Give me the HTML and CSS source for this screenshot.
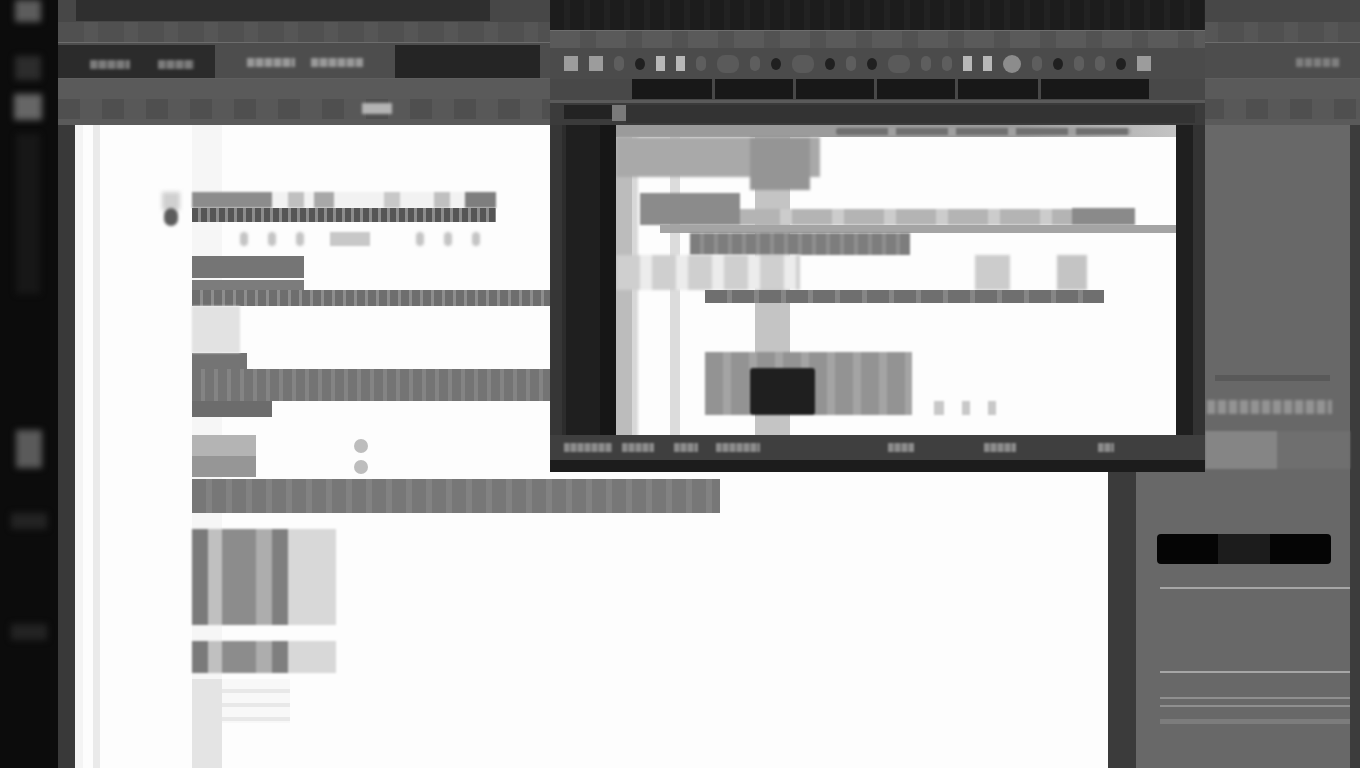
FILE: index.html
```html
<!DOCTYPE html>
<html lang="en">
<head>
  <meta charset="UTF-8">
  <meta name="viewport" content="width=device-width, initial-scale=1.0">
  <title>Desktop</title>
  <link rel="stylesheet" href="styles.css">
</head>
<body>
  <div class="desktop">
    <!-- far left dock -->
    <div class="dock">
      <div class="dock-icon dock-a"></div>
      <div class="dock-icon dock-b"></div>
      <div class="dock-icon dock-c"></div>
      <div class="dock-icon dock-d"></div>
      <div class="dock-icon dock-e"></div>
      <div class="dock-icon dock-f"></div>
      <div class="dock-icon dock-f"></div>
    </div>

    <!-- big window behind -->
    <div class="app">
      <div class="app-title">
        <div class="app-title-bar"></div>
      </div>
      <div class="app-menu"></div>
      <div class="app-tools">
        <div class="tool-dark tool-left"><span class="blobs blob-a"></span><span class="blobs blob-b"></span></div>
        <div class="tool-mid"><span class="blobs blob-c"></span><span class="blobs blob-d"></span></div>
        <div class="tool-dark tool-right"></div>
        <div class="tool-far"><span class="blobs blob-e"></span></div>
      </div>
      <div class="app-ribbon">
        <div class="ribbon-chip"></div>
      </div>

      <div class="app-body">
        <div class="side-rail"></div>
        <div class="page">
          <div class="row-head">
            <div class="head-marker"></div>
            <div class="head-marker-dark"></div>
            <div class="head-bar">
              <div class="head-tabs">
                <span class="tab tab-1"></span><span class="tab tab-2"></span><span class="tab tab-3"></span>
                <span class="tab tab-4"></span><span class="tab tab-5"></span><span class="tab tab-6"></span>
              </div>
              <div class="head-text"></div>
            </div>
          </div>
          <div class="row-chips">
            <span class="dot"></span><span class="dot"></span><span class="dot"></span><span class="chip"></span>
            <span class="dot dot-far"></span><span class="dot"></span><span class="dot"></span>
          </div>
          <div class="bar bar-title"></div>
          <div class="bar-wrap">
            <div class="bar bar-title-2"></div>
            <div class="bar bar-long-text"></div>
          </div>
          <div class="stub"></div>
          <div class="bar bar-label"></div>
          <div class="bar bar-wide"></div>
          <div class="bar bar-foot"></div>
          <div class="pair">
            <div class="pair-row"><span class="pair-cell"></span><span class="pair-dot"></span></div>
            <div class="pair-row"><span class="pair-cell pair-cell-dark"></span><span class="pair-dot"></span></div>
          </div>
          <div class="bar bar-span"></div>
          <div class="table-block table-tall">
            <span class="cell c-dark"></span><span class="cell c-light"></span><span class="cell c-mid"></span><span class="cell c-soft"></span><span class="cell c-dark-narrow"></span><span class="cell c-pale"></span>
          </div>
          <div class="table-block table-short">
            <span class="cell c-dark"></span><span class="cell c-light"></span><span class="cell c-mid"></span><span class="cell c-soft"></span><span class="cell c-dark-narrow"></span><span class="cell c-pale"></span>
          </div>
          <div class="fade-lines"></div>
        </div>
        <div class="gutter"></div>
        <div class="panel">
          <div class="panel-body">
            <div class="panel-line-dark"></div>
            <div class="panel-blobs"></div>
            <div class="panel-light"></div>
            <div class="panel-pill"></div>
            <div class="panel-rule panel-rule-1"></div>
            <div class="panel-rule panel-rule-2"></div>
            <div class="panel-rule panel-rule-3"></div>
            <div class="panel-rule panel-rule-4"></div>
            <div class="panel-rule panel-rule-5"></div>
          </div>
          <div class="panel-edge"></div>
        </div>
      </div>
    </div>

    <!-- floating window -->
    <div class="float">
      <div class="float-top"></div>
      <div class="float-menu"></div>
      <div class="float-tools">
        <span class="ico ico-sq"></span><span class="ico ico-sq"></span><span class="ico ico-dim"></span><span class="ico ico-dark"></span>
        <span class="ico ico-light"></span><span class="ico ico-light"></span><span class="ico ico-dim"></span><span class="ico ico-wide"></span>
        <span class="ico ico-dim"></span><span class="ico ico-dark"></span><span class="ico ico-wide"></span><span class="ico ico-dark"></span>
        <span class="ico ico-dim"></span><span class="ico ico-dark"></span><span class="ico ico-wide"></span><span class="ico ico-dim"></span>
        <span class="ico ico-dim"></span><span class="ico ico-light"></span><span class="ico ico-light"></span><span class="ico ico-round"></span>
        <span class="ico ico-dim"></span><span class="ico ico-dark"></span><span class="ico ico-dim"></span><span class="ico ico-dim"></span>
        <span class="ico ico-dark"></span><span class="ico ico-sq"></span>
      </div>
      <div class="float-fields">
        <span class="field field-1"></span><span class="field field-2"></span><span class="field field-3"></span>
        <span class="field field-4"></span><span class="field field-5"></span><span class="field field-6"></span>
      </div>
      <div class="float-tabs">
        <span class="tab-dark"></span><span class="tab-light"></span><span class="tab-fill"></span>
      </div>
      <div class="float-body">
        <div class="rail-outer"></div>
        <div class="rail-inner"></div>
        <div class="fpage">
          <div class="fpage-top"><span class="pills"></span></div>
          <div class="fblock-top"><span class="fblock-col"></span></div>
          <div class="fhead">
            <span class="fhead-left"></span>
            <span class="fhead-text"></span>
            <span class="fhead-chip"></span>
          </div>
          <div class="fband"></div>
          <div class="fsub"></div>
          <div class="fcols"><span class="fcol-a"></span><span class="fcol-b"></span><span class="fcol-c"></span></div>
          <div class="fline"></div>
          <div class="fgap"></div>
          <div class="fimage-row">
            <div class="fimage"><span class="fimage-dark"></span></div>
            <span class="fmini fmini-a"></span><span class="fmini fmini-b"></span><span class="fmini fmini-b"></span>
          </div>
        </div>
        <div class="rail-right"></div>
        <div class="rail-edge"></div>
      </div>
      <div class="float-status">
        <span class="sblob s1"></span><span class="sblob s2"></span><span class="sblob s3"></span><span class="sblob s4"></span>
        <span class="sblob s5"></span><span class="sblob s6"></span><span class="sblob s7"></span>
      </div>
      <div class="float-foot"></div>
    </div>
  </div>
</body>
</html>
```

FILE: styles.css
```css
html, body {
  margin: 0;
  padding: 0;
  background: #0c0c0c;
}

.desktop {
  position: relative;
  display: flex;
  width: 1360px;
  height: 768px;
  overflow: hidden;
}

/* dock */
.dock {
  width: 58px;
  flex: none;
  background: #0c0c0c;
  display: flex;
  flex-direction: column;
  align-items: center;
  position: relative;
}

.dock-icon {
  filter: blur(3px);
  flex: none;
}

.dock-a { width: 26px; height: 22px; background: #5c5c5c; margin: 0 0 34px -2px; }
.dock-b { width: 26px; height: 24px; background: #2c2c2c; margin: 0 0 14px -2px; }
.dock-c { width: 28px; height: 26px; background: #666; margin: 0 0 14px -2px; }
.dock-d { width: 24px; height: 160px; background: #171717; margin: 0 0 136px -2px; }
.dock-e { width: 26px; height: 38px; background: #5a5a5a; margin: 0 0 45px 0; }
.dock-f { width: 36px; height: 16px; background: #232323; margin: 0 0 95px 0; }

/* big window */
.app {
  flex: 1;
  display: flex;
  flex-direction: column;
  min-width: 0;
}

.app-title {
  height: 22px;
  background: #474747;
  padding-left: 18px;
}

.app-title-bar {
  width: 414px;
  height: 21px;
  background: #2f2f2f;
}

.app-menu {
  height: 20px;
  background: repeating-linear-gradient(90deg, #505050 0 26px, #565656 26px 40px);
  border-bottom: 1px solid #6d6d6d;
}

.app-tools {
  height: 35px;
  display: flex;
  background: #4d4d4d;
}

.tool-dark {
  background: #2b2b2b;
  height: 33px;
  margin-top: 2px;
}

.tool-left {
  width: 157px;
  position: relative;
}

.tool-right {
  width: 145px;
  background: #252525;
}

.tool-mid {
  width: 180px;
  position: relative;
}

.tool-far {
  flex: 1;
  position: relative;
}

.blobs {
  position: absolute;
  top: 15px;
  height: 9px;
  filter: blur(1.5px);
  background: repeating-linear-gradient(90deg, #9a9a9a 0 7px, #6a6a6a 7px 9px);
}

.blob-a { left: 32px; width: 40px; background: repeating-linear-gradient(90deg, #7c7c7c 0 7px, #555 7px 9px); }
.blob-b { left: 100px; width: 36px; background: repeating-linear-gradient(90deg, #7c7c7c 0 7px, #555 7px 9px); }
.blob-c { left: 32px; width: 48px; }
.blob-d { left: 96px; width: 52px; }
.blob-e { right: 20px; width: 44px; background: repeating-linear-gradient(90deg, #808080 0 7px, #555 7px 9px); }

.app-ribbon {
  height: 47px;
  background:
    repeating-linear-gradient(90deg, #4f4f4f 0 22px, #585858 22px 44px) 0 20px / 100% 20px no-repeat,
    #5a5a5a;
  border-top: 1px solid #5f5f5f;
  box-sizing: border-box;
  padding: 24px 0 0 304px;
}

.ribbon-chip {
  width: 30px;
  height: 11px;
  background: #b4b4b4;
  filter: blur(1.5px);
}

.app-body {
  flex: 1;
  display: flex;
  min-height: 0;
}

.side-rail {
  width: 17px;
  flex: none;
  background: #393939;
}

/* document page */
.page {
  width: 1033px;
  flex: none;
  background:
    linear-gradient(90deg, #f4f4f4 0 8px, transparent 8px 18px, #eaeaea 18px 25px, transparent 25px),
    linear-gradient(90deg, transparent 117px, #f6f6f6 117px 147px, transparent 147px);
  background-color: #fdfdfd;
  padding: 67px 0 0 117px;
  box-sizing: border-box;
  position: relative;
}

.row-head {
  position: relative;
}

.head-marker {
  position: absolute;
  left: -30px;
  top: 0;
  width: 18px;
  height: 18px;
  background: #d0d0d0;
  filter: blur(2px);
}

.head-marker-dark {
  position: absolute;
  left: -28px;
  top: 16px;
  width: 14px;
  height: 18px;
  background: #5c5c5c;
  border-radius: 7px;
  filter: blur(1.5px);
}

.head-bar {
  width: 304px;
}

.head-tabs {
  height: 16px;
  display: flex;
  background: #f2f2f2;
  filter: blur(1px);
}

.tab {
  display: block;
  height: 16px;
  background: #aaa;
}

.tab-1 { width: 80px; background: #8c8c8c; }
.tab-2 { width: 16px; margin-left: 16px; background: #c0c0c0; }
.tab-3 { width: 20px; margin-left: 10px; background: #a8a8a8; }
.tab-4 { width: 16px; margin-left: 50px; background: #c8c8c8; }
.tab-5 { width: 16px; margin-left: 34px; background: #c0c0c0; }
.tab-6 { width: 31px; margin-left: 15px; background: #7e7e7e; }

.head-text {
  height: 14px;
  background: repeating-linear-gradient(90deg, #555 0 6px, #8c8c8c 6px 9px);
  filter: blur(.5px);
}

.row-chips {
  height: 34px;
  display: flex;
  align-items: center;
  padding-left: 48px;
  gap: 20px;
}

.dot {
  width: 8px;
  height: 14px;
  border-radius: 4px;
  background: #c4c4c4;
  filter: blur(1.5px);
}

.dot-far {
  margin-left: 26px;
}

.chip {
  width: 40px;
  height: 14px;
  background: #c8c8c8;
  margin-left: 6px;
  filter: blur(1px);
}

.bar {
  background: #777;
}

.bar-title {
  width: 112px;
  height: 22px;
  background: #757575;
  margin-top: 0;
  filter: blur(.5px);
}

.bar-wrap {
  position: relative;
  height: 26px;
  margin-top: 2px;
}

.bar-title-2 {
  width: 112px;
  height: 26px;
  background: #7c7c7c;
}

.bar-long-text {
  position: absolute;
  left: 0;
  top: 10px;
  width: 358px;
  height: 16px;
  background: repeating-linear-gradient(90deg, #6e6e6e 0 8px, #8e8e8e 8px 11px);
  filter: blur(.5px);
}

.stub {
  width: 48px;
  height: 47px;
  background: #e2e2e2;
  filter: blur(1px);
}

.bar-label {
  width: 55px;
  height: 16px;
  background: #747474;
}

.bar-wide {
  width: 358px;
  height: 32px;
  background: repeating-linear-gradient(90deg, #747474 0 9px, #848484 9px 13px);
  filter: blur(.5px);
}

.bar-foot {
  width: 80px;
  height: 16px;
  background: #6c6c6c;
}

.pair {
  margin-top: 18px;
}

.pair-row {
  display: flex;
  align-items: center;
  height: 21px;
}

.pair-cell {
  display: block;
  width: 64px;
  height: 21px;
  background: #b4b4b4;
}

.pair-cell-dark {
  background: #969696;
}

.pair-dot {
  width: 14px;
  height: 14px;
  border-radius: 50%;
  background: #bdbdbd;
  margin-left: 98px;
}

.bar-span {
  width: 528px;
  height: 34px;
  background: repeating-linear-gradient(90deg, #777 0 14px, #828282 14px 20px);
  margin-top: 2px;
  filter: blur(.5px);
}

.table-block {
  display: flex;
  width: 144px;
  filter: blur(.8px);
}

.table-tall {
  height: 96px;
  margin-top: 16px;
}

.table-short {
  height: 32px;
  margin-top: 16px;
}

.cell {
  display: block;
}

.c-dark { width: 16px; background: #7a7a7a; }
.c-light { width: 14px; background: #c0c0c0; }
.c-mid { width: 34px; background: #8c8c8c; }
.c-soft { width: 16px; background: #adadad; }
.c-dark-narrow { width: 16px; background: #7f7f7f; }
.c-pale { width: 48px; background: #d8d8d8; }

.fade-lines {
  width: 98px;
  height: 90px;
  margin-top: 6px;
  background:
    linear-gradient(90deg, #e4e4e4 0 30px, transparent 30px),
    repeating-linear-gradient(180deg, #f8f8f8 0 10px, #e8e8e8 10px 14px) 0 0 / 100% 44px no-repeat;
}

.gutter {
  width: 28px;
  flex: none;
  background: #3b3b3b;
}

/* right panel */
.panel {
  flex: 1;
  display: flex;
  background: #686868;
}

.panel-body {
  flex: 1;
  padding: 250px 0 0 69px;
  box-sizing: border-box;
}

.panel-edge {
  width: 10px;
  background: #3c3c3c;
}

.panel-line-dark {
  width: 115px;
  height: 6px;
  background: #595959;
  margin-left: 10px;
}

.panel-blobs {
  width: 125px;
  height: 14px;
  margin: 19px 0 0 2px;
  background: repeating-linear-gradient(90deg, #939393 0 8px, #6f6f6f 8px 11px);
  filter: blur(1.5px);
}

.panel-light {
  width: 145px;
  height: 38px;
  margin-top: 17px;
  background: linear-gradient(90deg, #858585 0 50%, #6f6f6f 50%);
  filter: blur(1px);
}

.panel-pill {
  width: 174px;
  height: 30px;
  margin: 65px 0 0 -48px;
  border-radius: 4px;
  background: linear-gradient(90deg, #050505 0 35%, #1c1c1c 35% 65%, #050505 65%);
}

.panel-rule {
  height: 2px;
  background: #a6a6a6;
  margin-left: -45px;
}

.panel-rule-1 { margin-top: 23px; }
.panel-rule-2 { margin-top: 82px; }
.panel-rule-3 { margin-top: 24px; background: #8f8f8f; }
.panel-rule-4 { margin-top: 6px; background: #8f8f8f; }
.panel-rule-5 { margin-top: 12px; background: #7c7c7c; height: 5px; }

/* floating window */
.float {
  position: absolute;
  left: 550px;
  top: 0;
  width: 655px;
  height: 472px;
  display: flex;
  flex-direction: column;
  background: #2a2a2a;
}

.float-top {
  height: 30px;
  background: repeating-linear-gradient(90deg, #1c1c1c 0 14px, #222 14px 20px);
}

.float-menu {
  height: 18px;
  background: repeating-linear-gradient(90deg, #5a5a5a 0 30px, #525252 30px 46px);
  border-top: 1px solid #6e6e6e;
  box-sizing: border-box;
}

.float-tools {
  height: 31px;
  background: #4b4b4b;
  display: flex;
  align-items: center;
  padding-left: 14px;
  gap: 11px;
}

.ico {
  display: block;
  width: 14px;
  height: 15px;
  flex: none;
  filter: blur(.6px);
}

.ico-sq { background: #9c9c9c; }
.ico-dim { width: 10px; background: #5e5e5e; border-radius: 5px; }
.ico-dark { width: 10px; height: 12px; background: #202020; border-radius: 50%; }
.ico-light { width: 9px; background: #b8b8b8; }
.ico-wide { width: 22px; height: 18px; background: #5a5a5a; border-radius: 8px; }
.ico-round { width: 18px; height: 18px; background: #8c8c8c; border-radius: 50%; }

.float-fields {
  height: 21px;
  background: #484848;
  display: flex;
  padding-left: 82px;
  gap: 3px;
}

.field {
  display: block;
  height: 20px;
  background: #181818;
}

.field-1 { width: 80px; }
.field-2 { width: 78px; }
.field-3 { width: 78px; }
.field-4 { width: 78px; }
.field-5 { width: 80px; }
.field-6 { width: 108px; }

.float-tabs {
  height: 25px;
  background: #3b3b3b;
  border-top: 3px solid #5a5a5a;
  box-sizing: border-box;
  display: flex;
  padding: 2px 10px 0 14px;
}

.tab-dark {
  display: block;
  width: 48px;
  height: 14px;
  background: #232323;
}

.tab-light {
  display: block;
  width: 14px;
  height: 16px;
  background: #7a7a7a;
}

.tab-fill {
  display: block;
  flex: 1;
  height: 18px;
  background: #333;
}

.float-body {
  height: 310px;
  display: flex;
}

.rail-outer {
  width: 12px;
  background: #363636;
}

.rail-inner {
  width: 54px;
  background: linear-gradient(90deg, #2c2c2c 0 4px, #1f1f1f 4px 38px, #161616 38px);
}

.fpage {
  width: 560px;
  flex: none;
  background:
    linear-gradient(90deg, #bcbcbc 0 16px, #d8d8d8 16px 20px, transparent 24px 54px, #dcdcdc 54px 64px, transparent 64px),
    linear-gradient(90deg, transparent 139px, #c4c4c4 139px 174px, transparent 174px);
  background-color: #fdfdfd;
  overflow: hidden;
}

.fpage-top {
  height: 12px;
  background: linear-gradient(90deg, #9b9b9b 0 70%, #c4c4c4 100%);
  position: relative;
}

.pills {
  position: absolute;
  left: 220px;
  top: 3px;
  width: 295px;
  height: 7px;
  border-radius: 3px;
  background: repeating-linear-gradient(90deg, #707070 0 52px, #a0a0a0 52px 60px);
  filter: blur(1px);
}

.fblock-top {
  width: 204px;
  height: 40px;
  background: #a9a9a9;
  position: relative;
  filter: blur(1.5px);
}

.fblock-col {
  position: absolute;
  left: 134px;
  top: 0;
  width: 60px;
  height: 53px;
  background: #959595;
}

.fhead {
  display: flex;
  height: 32px;
  margin-top: 16px;
  padding-left: 24px;
  align-items: flex-end;
  position: relative;
  filter: blur(1px);
}

.fhead-left {
  display: block;
  width: 100px;
  height: 32px;
  background: #8b8b8b;
}

.fhead-text {
  display: block;
  width: 332px;
  height: 16px;
  background: repeating-linear-gradient(90deg, #b4b4b4 0 40px, #cccccc 40px 52px);
}

.fhead-chip {
  display: block;
  width: 63px;
  height: 17px;
  background: #8a8a8a;
}

.fband {
  height: 8px;
  margin-left: 44px;
  background: #a4a4a4;
  filter: blur(.6px);
}

.fsub {
  width: 220px;
  height: 22px;
  margin-left: 74px;
  background: repeating-linear-gradient(90deg, #7d7d7d 0 10px, #8f8f8f 10px 14px);
  filter: blur(1px);
}

.fcols {
  display: flex;
  height: 35px;
  position: relative;
  filter: blur(1.5px);
}

.fcol-a {
  display: block;
  width: 184px;
  background: repeating-linear-gradient(90deg, #cfcfcf 0 24px, #ececec 24px 36px);
  margin-left: 0;
}

.fcol-b {
  display: block;
  width: 35px;
  background: #ccc;
  margin-left: 175px;
}

.fcol-c {
  display: block;
  width: 30px;
  background: #c4c4c4;
  margin-left: 47px;
}

.fline {
  width: 399px;
  height: 13px;
  margin-left: 89px;
  background: repeating-linear-gradient(90deg, #6f6f6f 0 22px, #868686 22px 27px);
  filter: blur(.7px);
}

.fgap {
  height: 49px;
}

.fimage-row {
  display: flex;
  align-items: flex-end;
  padding-left: 89px;
}

.fimage {
  width: 207px;
  height: 63px;
  background: repeating-linear-gradient(90deg, #939393 0 18px, #a4a4a4 18px 26px);
  position: relative;
  filter: blur(1px);
}

.fimage-dark {
  position: absolute;
  left: 45px;
  top: 16px;
  width: 65px;
  height: 47px;
  background: #1f1f1f;
  border-radius: 3px;
}

.fmini {
  display: block;
  height: 14px;
  background: #c8c8c8;
  filter: blur(1px);
}

.fmini-a { width: 10px; margin-left: 22px; }
.fmini-b { width: 8px; margin-left: 18px; }

.rail-right {
  width: 17px;
  background: #1f1f1f;
}

.rail-edge {
  flex: 1;
  background: #333;
}

.float-status {
  height: 25px;
  background: #3f3f3f;
  display: flex;
  align-items: center;
  padding-left: 14px;
}

.sblob {
  display: block;
  height: 9px;
  background: repeating-linear-gradient(90deg, #8c8c8c 0 5px, #6a6a6a 5px 7px);
  filter: blur(1px);
}

.s1 { width: 48px; }
.s2 { width: 32px; margin-left: 10px; }
.s3 { width: 24px; margin-left: 20px; }
.s4 { width: 44px; margin-left: 18px; }
.s5 { width: 26px; margin-left: 128px; }
.s6 { width: 32px; margin-left: 70px; }
.s7 { width: 16px; margin-left: 82px; }

.float-foot {
  flex: 1;
  background: #1c1c1c;
}
```
